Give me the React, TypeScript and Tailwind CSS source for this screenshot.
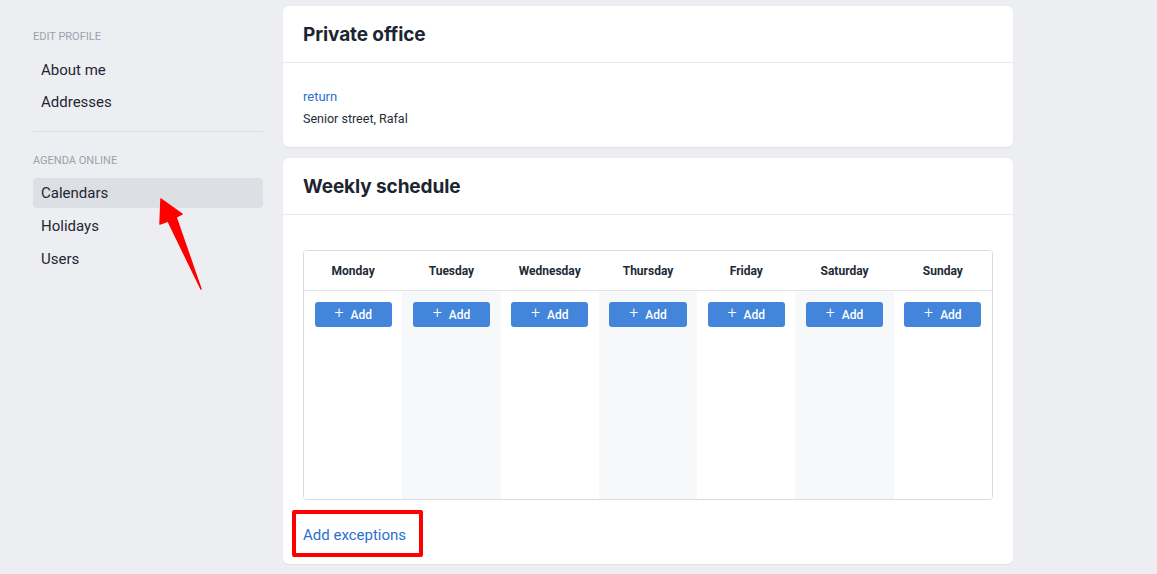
import React from 'react';

const DAYS = ['Monday', 'Tuesday', 'Wednesday', 'Thursday', 'Friday', 'Saturday', 'Sunday'];

const SideItem: React.FC<{ label: string; active?: boolean }> = ({ label, active }) => (
  <div className={`h-[30px] flex items-center px-2 rounded text-[15px] text-[#1f2733] ${active ? 'bg-[#dcdfe4]' : ''}`}>
    {label}
  </div>
);

const Card: React.FC<{ title: string; children: React.ReactNode }> = ({ title, children }) => (
  <div className="bg-white rounded-md shadow-[0_1px_2px_rgba(0,0,0,0.06)]">
    <div className="h-[57px] flex items-center px-5 border-b border-[#e8eaee]">
      <h2 className="text-[19px] font-bold text-[#1c2530] font-['Inter',sans-serif] tracking-[-0.1px] mt-[2px]">{title}</h2>
    </div>
    {children}
  </div>
);

export default function App() {
  return (
    <div className="relative w-[1157px] h-[574px] bg-[#edeef2] overflow-hidden font-['Roboto',sans-serif] flex">
      <aside className="w-[263px] pl-[33px] pt-[29px] shrink-0">
        <div className="text-[11px] leading-4 text-[#9aa1ab] uppercase mb-[10px]">Edit profile</div>
        <div className="flex flex-col gap-[2px]">
          <SideItem label="About me" />
          <SideItem label="Addresses" />
        </div>
        <div className="border-t border-[#d9dce1] mt-[14px]" />
        <div className="text-[11px] leading-4 text-[#9aa1ab] uppercase mt-[21px] mb-[9px]">Agenda online</div>
        <div className="flex flex-col gap-[3px]">
          <SideItem label="Calendars" active />
          <SideItem label="Holidays" />
          <SideItem label="Users" />
        </div>
      </aside>

      <main className="ml-5 w-[730px] pt-[6px] flex flex-col gap-[11px]">
        <Card title="Private office">
          <div className="px-5 pt-[24px] pb-[18px] flex flex-col gap-[2px]">
            <a className="text-[13px] leading-5 text-[#2b6fce]">return</a>
            <div className="text-[12.5px] leading-5 text-[#262d36]">Senior street, Rafal</div>
          </div>
        </Card>

        <Card title="Weekly schedule">
          <div className="px-5 pt-[35px] pb-[19px]">
            <div className="border border-[#d8dbe0] rounded grid grid-cols-7 overflow-hidden">
              {DAYS.map((d, i) => (
                <div key={d} className={`flex flex-col ${i % 2 === 1 ? 'bg-[#f7f8fa]' : 'bg-white'}`}>
                  <div className="h-[40px] flex items-center justify-center bg-white border-b border-[#e1e4e8] text-[12px] font-bold text-[#222a35]">
                    {d}
                  </div>
                  <div className="h-[208px] px-[10.5px] pt-[11px]">
                    <button className="w-full h-[25px] bg-[#4285db] rounded-[3px] text-white text-[12px] flex items-center justify-center gap-[7px]">
                      <span className="text-[16px] leading-none -mt-[3px] font-light">+</span>
                      <span className="font-medium">Add</span>
                    </button>
                  </div>
                </div>
              ))}
            </div>
            <div className="relative mt-[25px] h-5 flex items-center">
              <a className="text-[15px] leading-5 text-[#2b6fce]">Add exceptions</a>
              <div className="absolute left-[-11px] top-[-15px] w-[131px] h-[47px] border-[4px] border-[#ff0000] rounded-[2px]" />
            </div>
          </div>
        </Card>
      </main>

      <svg className="absolute left-0 top-0 pointer-events-none" width="1157" height="574" viewBox="0 0 1157 574">
        <polygon
          points="161,199 182,214 176,217 201,289 168,221 160,224"
          fill="#ff0000"
          stroke="#ff0000"
          strokeWidth="1.5"
          strokeLinejoin="round"
        />
      </svg>
    </div>
  );
}
